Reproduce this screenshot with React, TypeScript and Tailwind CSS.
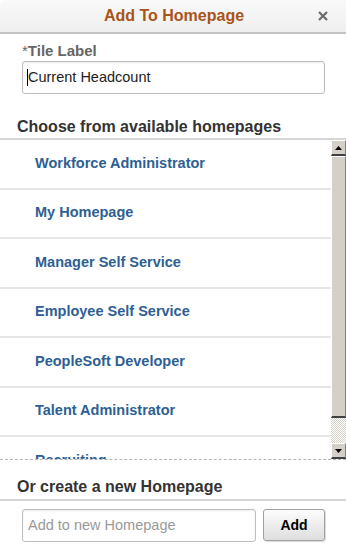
import React from "react";

const items = [
  "Workforce Administrator",
  "My Homepage",
  "Manager Self Service",
  "Employee Self Service",
  "PeopleSoft Developer",
  "Talent Administrator",
  "Recruiting",
];

function Arrow({ up }: { up?: boolean }) {
  return (
    <div className="h-[16px] w-[15px] shrink-0 bg-[#d4d0c8] border-t border-l border-t-white border-l-white border-b-2 border-b-[#404040] border-r border-r-[#808080] flex items-center justify-center">
      <svg width="7" height="4" viewBox="0 0 7 4">
        {up ? <polygon points="0,4 7,4 3.5,0" fill="#000" /> : <polygon points="0,0 7,0 3.5,4" fill="#000" />}
      </svg>
    </div>
  );
}

export default function App() {
  return (
    <div className="w-[346px] h-[548px] bg-white flex flex-col overflow-hidden" style={{ fontFamily: '"Liberation Sans", Arial, sans-serif' }}>
      <div className="h-[34px] shrink-0 rounded-tl-[6px] bg-gradient-to-b from-[#f9f9f9] to-[#efefef] border-b-2 border-[#c4c4c4] flex items-center">
        <div className="flex-1 text-center pl-[42px] text-[16px] font-bold text-[#a9541a] leading-none">Add To Homepage</div>
        <div className="w-[40px] flex items-center justify-center pr-[6px]">
          <svg width="10" height="10" viewBox="0 0 10 10">
            <path d="M1 1 L9 9 M9 1 L1 9" stroke="#6b6b6b" strokeWidth="2.2" />
          </svg>
        </div>
      </div>
      <div className="pl-[22px] pr-[21px] pt-[9px]">
        <div className="text-[15px] text-[#666] leading-[16px]">
          <span className="font-normal">*</span>
          <span className="font-bold">Tile Label</span>
        </div>
        <div className="mt-[2px] h-[33px] border border-[#bdbdbd] rounded-[3px] bg-white shadow-[inset_0_1px_2px_rgba(0,0,0,0.08)] flex items-center pl-[4px] text-[14.5px] text-[#222]">
          <span className="border-l border-black leading-[17px]">Current Headcount</span>
        </div>
      </div>
      <div className="pl-[17px] pt-[25px] pb-[3px] text-[16px] font-bold text-[#333] leading-[16px]">Choose from available homepages</div>
      <div className="h-[322px] shrink-0 border-t-2 border-[#d5d5d5] flex flex-col">
        <div className="flex-1 flex min-h-0">
          <div className="flex-1 overflow-hidden">
            {items.map((t) => (
              <div key={t} className="h-[49.5px] border-b-2 border-[#e6e6e6] flex items-center pl-[35px] text-[14.5px] font-bold text-[#2e5f93]">
                {t}
              </div>
            ))}
          </div>
          <div className="w-[15px] flex flex-col">
            <Arrow up />
            <div className="h-[262px] shrink-0 bg-[#d4d0c8] border-t border-l border-white border-b-2 border-b-[#404040] border-r border-r-[#808080]" />
            <div className="flex-1 bg-[repeating-conic-gradient(#d4d0c8_0%_25%,#ffffff_0%_50%)] bg-[length:2px_2px]" />
            <Arrow />
          </div>
        </div>
        <div className="h-0 border-b border-dashed border-[#b5b5b5]" />
      </div>
      <div className="pl-[17px] pt-[19px] pb-[4px] text-[16px] font-bold text-[#333] leading-[16px]">Or create a new Homepage</div>
      <div className="border-t-2 border-[#d5d5d5] pl-[22px] pr-[21px] pt-[8px] flex gap-[7px]">
        <div className="w-[234px] h-[33px] border border-[#bdbdbd] rounded-[3px] bg-white shadow-[inset_0_1px_2px_rgba(0,0,0,0.08)] flex items-center pl-[5px] text-[14.5px] text-[#999]">
          Add to new Homepage
        </div>
        <div className="flex-1 h-[32px] border border-[#a0a0a0] rounded-[3px] bg-gradient-to-b from-[#fdfdfd] to-[#dedede] shadow-[1px_1px_1px_rgba(0,0,0,0.15)] flex items-center justify-center text-[14px] font-bold text-black">
          Add
        </div>
      </div>
    </div>
  );
}
